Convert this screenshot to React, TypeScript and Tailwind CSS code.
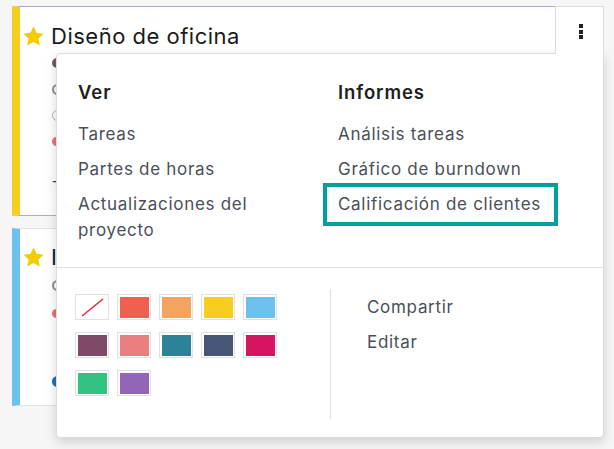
import React from "react";

const swatches = [
  "none",
  "#f06050",
  "#f4a460",
  "#f7cd1f",
  "#6cc1ed",
  "#814968",
  "#eb7e7f",
  "#2c8397",
  "#475577",
  "#d6145f",
  "#30c381",
  "#9365b8",
];

function Star() {
  return (
    <svg viewBox="0 0 24 24" className="w-[23px] h-[23px] shrink-0">
      <polygon
        fill="#f3cc00"
        points="12,1.5 15.2,8.2 22.5,9.1 17.1,14.1 18.5,21.4 12,17.8 5.5,21.4 6.9,14.1 1.5,9.1 8.8,8.2"
      />
    </svg>
  );
}

function MenuItem({ children, focused }: { children: React.ReactNode; focused?: boolean }) {
  return (
    <div className="relative px-[15px] py-[4.5px] text-[17px] leading-[26px] tracking-[0.7px] text-[#4a4f59]">
      {children}
      {focused && (
        <span className="absolute left-0 right-0 top-[-3px] bottom-[-5px] border-[4px] border-[#00a09d]" />
      )}
    </div>
  );
}

export default function App() {
  return (
    <div
      className="relative min-h-screen bg-[#f6f6f6] overflow-hidden"
      style={{ fontFamily: "Inter, 'Noto Sans', sans-serif" }}
    >
      <div className="flex flex-col gap-[12px] pt-[6px] pl-[12px] w-[604px]">
        {/* Card 1 */}
        <div className="h-[210px] bg-white border border-[#aea8d3] border-l-[8px] border-l-[#f7cd1f] rounded-r-[4px] pt-[15px] pl-[2px]">
          <div className="flex items-center gap-[6px] h-[28px]">
            <Star />
            <span className="text-[22px] leading-[28px] tracking-[0.5px] text-[#1a1a1a]">Diseño de oficina</span>
          </div>
          <div className="pl-[30px] flex flex-col">
            <div className="h-[26px] flex items-center">
              <span className="w-[10px] h-[10px] rounded-full bg-[#6d5f5f]" />
            </div>
            <div className="h-[26px] flex items-center">
              <span className="w-[11px] h-[11px] rounded-full border-2 border-[#8b909a]" />
            </div>
            <div className="h-[26px] flex items-center">
              <span className="w-[11px] h-[11px] rounded-full border-[1.5px] border-[#b5b5b5]" />
            </div>
            <div className="h-[26px] flex items-center">
              <span className="w-[9px] h-[9px] rounded-full bg-[#e57373]" />
            </div>
            <div className="h-[20px]" />
            <div className="h-[26px] flex items-center text-[16px] text-[#1d3f6e]">Tareas</div>
          </div>
        </div>

        {/* Card 2 */}
        <div className="h-[178px] bg-white border border-[#e2e2e2] border-l-[8px] border-l-[#6cc1ed] rounded-r-[4px] pt-[14px] pl-[2px]">
          <div className="flex items-center gap-[6px] h-[28px]">
            <Star />
            <span className="text-[22px] leading-[28px] tracking-[0.5px] text-[#1a1a1a]">Investigación</span>
          </div>
          <div className="pl-[30px] flex flex-col">
            <div className="h-[28px] flex items-center">
              <span className="w-[11px] h-[11px] rounded-full border-2 border-[#8b909a]" />
            </div>
            <div className="h-[28px] flex items-center">
              <span className="w-[9px] h-[9px] rounded-full bg-[#e57373]" />
            </div>
            <div className="h-[40px]" />
            <div className="h-[28px] flex items-center">
              <span className="w-[11px] h-[11px] rounded-full bg-[#1f6fb2]" />
            </div>
          </div>
        </div>
      </div>

      {/* Dropdown toggle */}
      <div className="absolute left-[555px] top-[6px] w-[49px] h-[48px] bg-white border border-b-0 border-[#dcdcdc] z-20 flex justify-center pt-[17px]">
        <div className="flex flex-col gap-[1.5px] ml-[2px]">
          <span className="w-[4px] h-[4px] bg-[#222]" />
          <span className="w-[4px] h-[4px] bg-[#222]" />
          <span className="w-[4px] h-[4px] bg-[#222]" />
        </div>
      </div>

      {/* Dropdown menu */}
      <div className="absolute left-[56px] top-[53px] w-[548px] bg-white border border-[#dcdcdc] rounded-b-[4px] rounded-tl-[4px] shadow-[0_4px_12px_rgba(0,0,0,0.16)] z-10">
        <div className="grid grid-cols-[235px_235px] gap-x-[25px] pl-[6px] pt-[25px] pb-[20px]">
          <div>
            <div className="px-[15px] text-[18.5px] leading-[26px] tracking-[0.9px] font-semibold text-[#1e1e1e] mb-[11px]">Ver</div>
            <MenuItem>Tareas</MenuItem>
            <MenuItem>Partes de horas</MenuItem>
            <MenuItem>Actualizaciones del proyecto</MenuItem>
          </div>
          <div>
            <div className="px-[15px] text-[18.5px] leading-[26px] tracking-[0.9px] font-semibold text-[#1e1e1e] mb-[11px]">Informes</div>
            <MenuItem>Análisis tareas</MenuItem>
            <MenuItem>Gráfico de burndown</MenuItem>
            <MenuItem focused>Calificación de clientes</MenuItem>
          </div>
        </div>

        <div className="border-t border-[#e0e0e0] flex h-[170px] pt-[21px] pb-[18px]">
          <div className="w-[273px] pl-[18px] pt-[5px]">
            <div className="grid grid-cols-[repeat(5,34px)] gap-x-[8px] gap-y-[12px]">
              {swatches.map((c, i) => (
                <div key={i} className="h-[26px] border border-[#dee2e6] p-[1.5px] bg-white">
                  {c === "none" ? (
                    <svg viewBox="0 0 30 22" className="w-full h-full">
                      <line x1="4" y1="20" x2="26" y2="2" stroke="#e5202a" strokeWidth="1.4" />
                    </svg>
                  ) : (
                    <div className="w-full h-full" style={{ backgroundColor: c }} />
                  )}
                </div>
              ))}
            </div>
          </div>
          <div className="border-l border-[#e0e0e0] pl-[21px]">
            <MenuItem>Compartir</MenuItem>
            <MenuItem>Editar</MenuItem>
          </div>
        </div>
      </div>
    </div>
  );
}
